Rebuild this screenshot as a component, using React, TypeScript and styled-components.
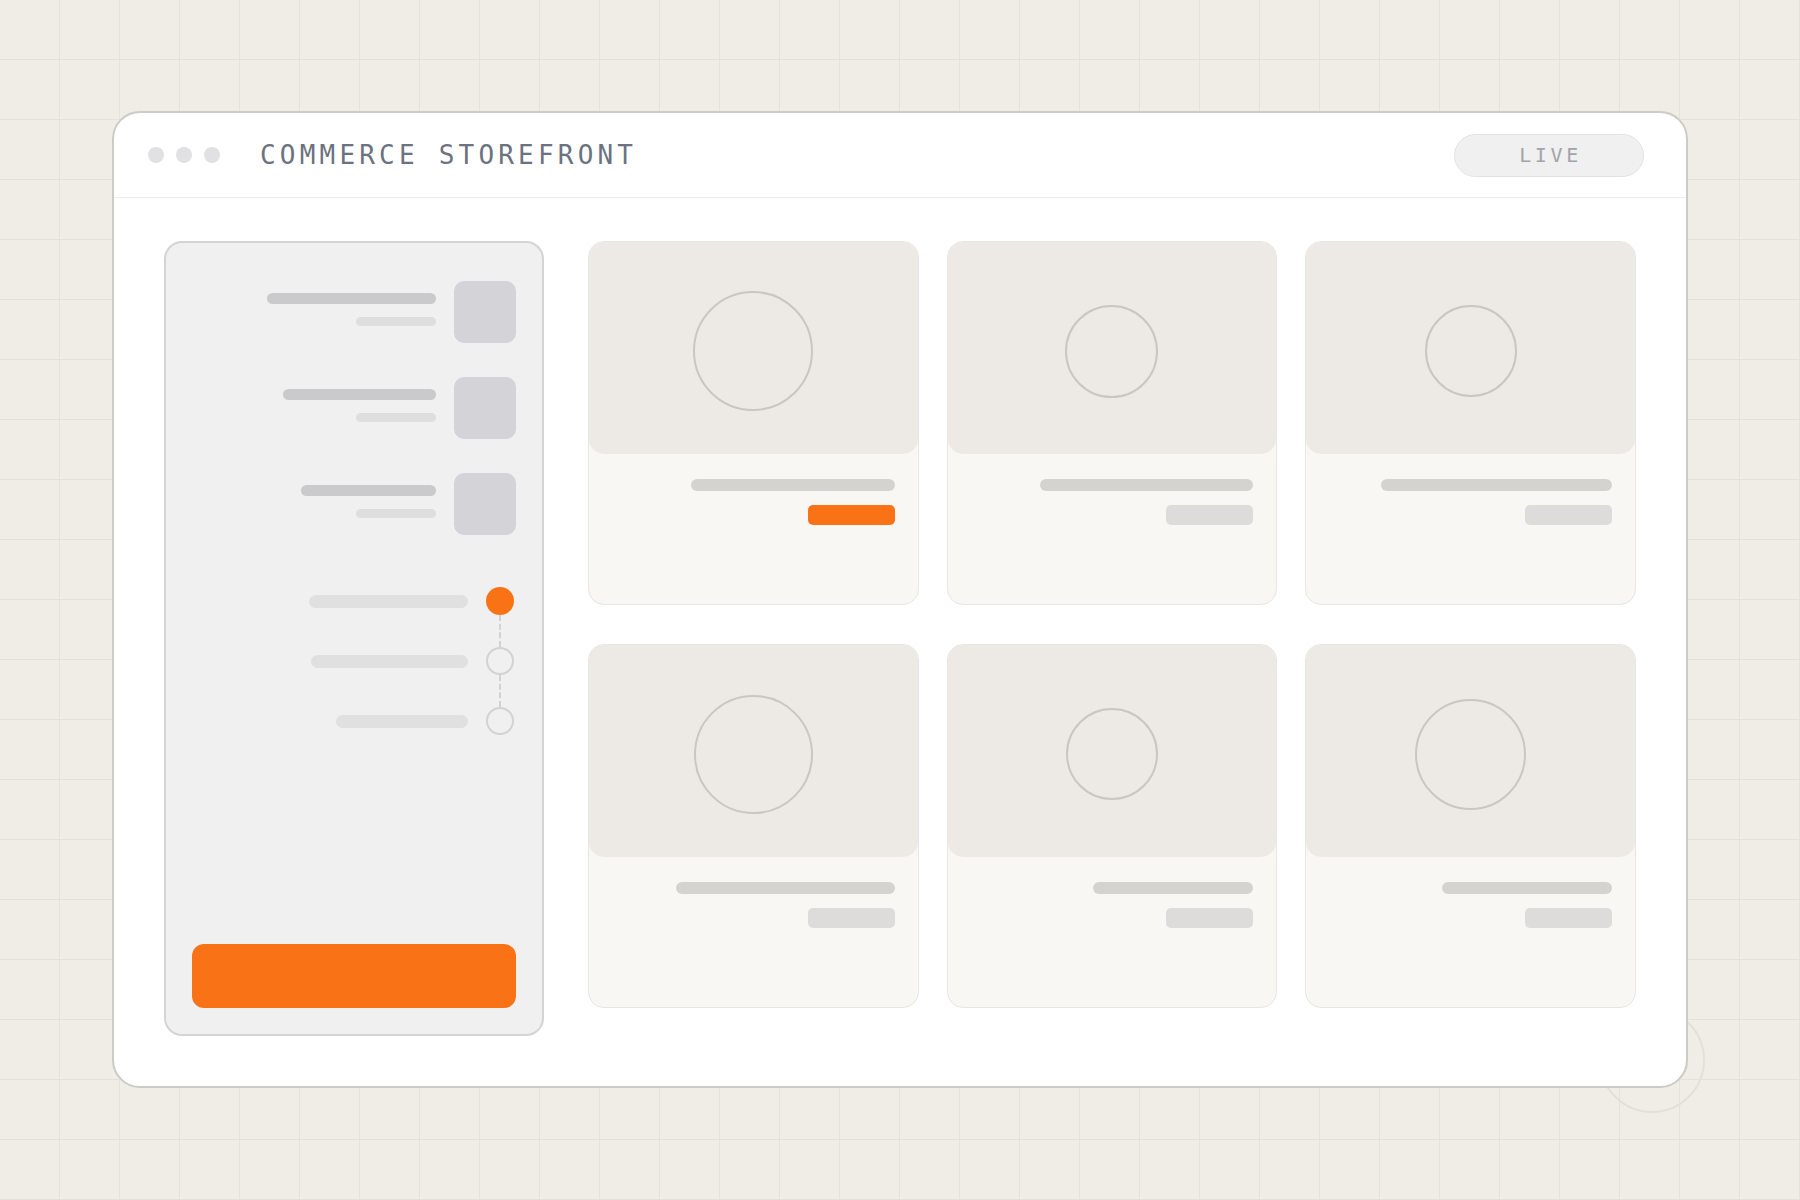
import styled, { createGlobalStyle } from "styled-components";

const ORANGE = "#f97316";

const GlobalStyle = createGlobalStyle`
	* {
		box-sizing: border-box;
	}
	body {
		margin: 0;
		font-family: "Inter", "Liberation Sans", sans-serif;
	}
`;

const Page = styled.div`
	position: relative;
	height: 1200px;
	padding: 111px 112px 112px;
	background-color: #f0ede7;
	background-image: linear-gradient(to right, transparent 59px, #e5e2dc 59px),
		linear-gradient(to bottom, transparent 59px, #e5e2dc 59px);
	background-size: 60px 60px;
	overflow: hidden;
`;

// faint ring peeking out from behind the window's lower right corner
const Ring = styled.div`
	position: absolute;
	left: 1599px;
	top: 1007px;
	width: 106px;
	height: 106px;
	border-radius: 50%;
	border: 2px solid #e3e0da;
`;

const Window = styled.div`
	position: relative;
	display: flex;
	flex-direction: column;
	height: 977px;
	background: #ffffff;
	border: 2px solid #cdcbc7;
	border-radius: 28px;
	overflow: hidden;
`;

const Header = styled.header`
	display: flex;
	align-items: center;
	height: 85px;
	padding: 0 42px 0 34px;
	border-bottom: 1px solid #ececec;
	flex-shrink: 0;
`;

const Dots = styled.div`
	display: flex;
	gap: 12px;
	margin-right: 40px;
`;

const Dot = styled.span`
	width: 16px;
	height: 16px;
	border-radius: 50%;
	background: #e1e1e3;
`;

const Title = styled.h1`
	margin: 0;
	font-family: "DejaVu Sans Mono", "Liberation Mono", monospace;
	font-size: 26px;
	font-weight: 400;
	letter-spacing: 4.2px;
	color: #6b7280;
`;

const LivePill = styled.div`
	margin-left: auto;
	display: flex;
	align-items: center;
	justify-content: center;
	width: 190px;
	height: 43px;
	border-radius: 22px;
	background: #f0f0f0;
	border: 1px solid #e2e2e2;
	font-family: "DejaVu Sans Mono", "Liberation Mono", monospace;
	font-size: 20px;
	letter-spacing: 3.6px;
	color: #a3a3aa;
	padding-left: 3px;
`;

const Body = styled.main`
	flex: 1;
	display: flex;
	gap: 44px;
	padding: 43px 50px 50px;
`;

const Sidebar = styled.aside`
	width: 380px;
	flex-shrink: 0;
	display: flex;
	flex-direction: column;
	padding: 38px 26px 26px;
	background: #f0f0f0;
	border: 2px solid #d4d4d4;
	border-radius: 18px;
`;

const CartList = styled.div`
	display: flex;
	flex-direction: column;
	gap: 34px;
`;

const CartRow = styled.div`
	display: flex;
	justify-content: flex-end;
	gap: 18px;
`;

const CartText = styled.div`
	display: flex;
	flex-direction: column;
	align-items: flex-end;
	gap: 13px;
	padding-top: 12px;
`;

const Bar = styled.div<{ $w: number; $h: number; $c: string }>`
	width: ${(p) => p.$w}px;
	height: ${(p) => p.$h}px;
	border-radius: ${(p) => p.$h / 2}px;
	background: ${(p) => p.$c};
`;

const Thumb = styled.div`
	width: 62px;
	height: 62px;
	border-radius: 10px;
	background: #d4d4d8;
`;

const Steps = styled.div`
	display: flex;
	flex-direction: column;
	align-items: flex-end;
	margin-top: 52px;
`;

const StepRow = styled.div`
	display: flex;
	align-items: center;
	gap: 18px;
	padding-right: 2px;
`;

const StepDot = styled.span<{ $done?: boolean }>`
	width: 28px;
	height: 28px;
	border-radius: 50%;
	background: ${(p) => (p.$done ? ORANGE : "transparent")};
	border: ${(p) => (p.$done ? "none" : "2px solid #d2d2d2")};
`;

const Connector = styled.div`
	width: 0;
	height: 32px;
	margin-right: 15px;
	border-left: 2px dashed #d2d2d2;
`;

const Checkout = styled.button`
	margin-top: auto;
	width: 100%;
	height: 64px;
	border: none;
	border-radius: 12px;
	background: ${ORANGE};
`;

const Grid = styled.section`
	flex: 1;
	display: grid;
	grid-template-columns: repeat(3, 1fr);
	grid-template-rows: 364px 364px;
	column-gap: 28px;
	row-gap: 39px;
	align-content: start;
`;

const Card = styled.article`
	display: flex;
	flex-direction: column;
	background: #f9f7f4;
	border: 1px solid #e8e6e2;
	border-radius: 16px;
	overflow: hidden;
`;

const ImageArea = styled.div`
	height: 212px;
	display: flex;
	align-items: center;
	justify-content: center;
	padding-top: 6px;
	background: #edeae6;
	border-radius: 15px;
`;

const Placeholder = styled.div<{ $size: number }>`
	width: ${(p) => p.$size}px;
	height: ${(p) => p.$size}px;
	border-radius: 50%;
	border: 2px solid #cac6c2;
`;

const CardInfo = styled.div`
	display: flex;
	flex-direction: column;
	align-items: flex-end;
	gap: 14px;
	padding: 25px 23px 0;
`;

const Price = styled.div<{ $accent?: boolean }>`
	width: 87px;
	height: 20px;
	border-radius: 5px;
	background: ${(p) => (p.$accent ? ORANGE : "#dddcda")};
`;

const cartItems = [169, 153, 135];
const steps = [159, 157, 132];

const products = [
	{ circle: 120, title: 204, accent: true },
	{ circle: 93, title: 213, accent: false },
	{ circle: 92, title: 231, accent: false },
	{ circle: 119, title: 219, accent: false },
	{ circle: 92, title: 160, accent: false },
	{ circle: 111, title: 170, accent: false },
];

export default function App() {
	return (
		<>
			<GlobalStyle />
			<Page>
				<Ring />
				<Window>
					<Header>
						<Dots>
							<Dot />
							<Dot />
							<Dot />
						</Dots>
						<Title>COMMERCE STOREFRONT</Title>
						<LivePill>LIVE</LivePill>
					</Header>
					<Body>
						<Sidebar>
							<CartList>
								{cartItems.map((w, i) => (
									<CartRow key={i}>
										<CartText>
											<Bar $w={w} $h={11} $c="#cacacd" />
											<Bar $w={80} $h={9} $c="#dededf" />
										</CartText>
										<Thumb />
									</CartRow>
								))}
							</CartList>
							<Steps>
								{steps.map((w, i) => (
									<div key={i} style={{ display: "contents" }}>
										{i > 0 && <Connector />}
										<StepRow>
											<Bar $w={w} $h={13} $c="#e0e0e0" />
											<StepDot $done={i === 0} />
										</StepRow>
									</div>
								))}
							</Steps>
							<Checkout />
						</Sidebar>
						<Grid>
							{products.map((p, i) => (
								<Card key={i}>
									<ImageArea>
										<Placeholder $size={p.circle} />
									</ImageArea>
									<CardInfo>
										<Bar $w={p.title} $h={12} $c="#d4d3d0" />
										<Price $accent={p.accent} />
									</CardInfo>
								</Card>
							))}
						</Grid>
					</Body>
				</Window>
			</Page>
		</>
	);
}
